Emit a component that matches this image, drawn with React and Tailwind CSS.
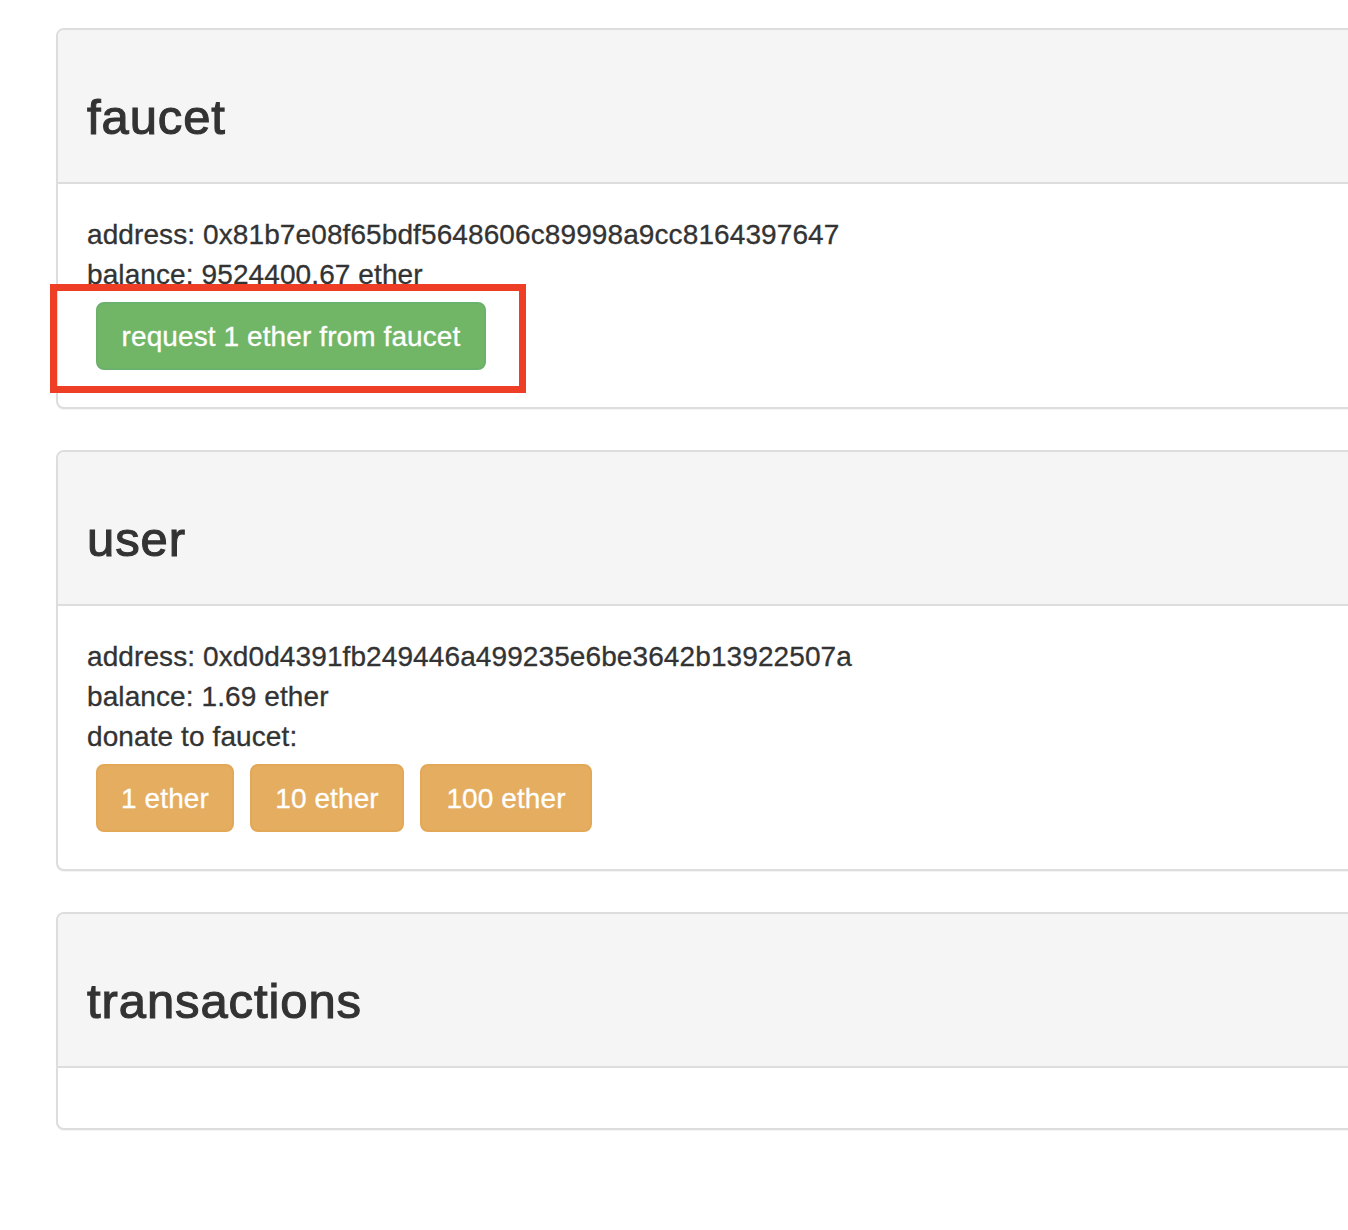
function Card({ title, children }) {
  return (
    <section className="w-[1400px] mb-[41px] rounded-lg border-2 border-[#ddd] bg-white shadow-[0_1px_1px_rgba(0,0,0,0.05)] overflow-hidden">
      <header className="h-[154px] pt-[57px] pl-[29px] bg-[#f5f5f5] border-b-2 border-[#ddd]">
        <h1 className="text-[49px] leading-[60px] font-normal tracking-[0.9px] [-webkit-text-stroke:1.1px_#333] text-[#333]">{title}</h1>
      </header>
      <div className="pt-[31px] pb-[29px] pl-[29px] text-[28px] leading-[40px] tracking-[0.1px] [-webkit-text-stroke:0.3px_#333] text-[#333]">{children}</div>
    </section>
  )
}

function Btn({ children, className }) {
  return (
    <button className={"h-[68px] pt-[2px] rounded-lg border-2 text-[28px] text-white [-webkit-text-stroke:0.3px_#fff] " + className}>
      {children}
    </button>
  )
}

export default function App() {
  return (
    <div className="relative w-[1348px] h-[1230px] overflow-hidden bg-white pl-[56px] pt-[28px] font-['Liberation_Sans',Arial,sans-serif]">
      <Card title="faucet">
        <div>address: 0x81b7e08f65bdf5648606c89998a9cc8164397647</div>
        <div>balance: 9524400.67 ether</div>
        <div className="flex gap-4 mt-[7px] mb-2 ml-[9px]">
          <Btn className="w-[390px] border-[#6bb06b] bg-[#71b566]">request 1 ether from faucet</Btn>
        </div>
      </Card>
      <Card title="user">
        <div>address: 0xd0d4391fb249446a499235e6be3642b13922507a</div>
        <div>balance: 1.69 ether</div>
        <div>donate to faucet:</div>
        <div className="flex gap-4 mt-[7px] mb-2 ml-[9px]">
          <Btn className="w-[138px] border-[#e3a857] bg-[#e4ad5f]">1 ether</Btn>
          <Btn className="w-[154px] border-[#e3a857] bg-[#e4ad5f]">10 ether</Btn>
          <Btn className="w-[172px] border-[#e3a857] bg-[#e4ad5f]">100 ether</Btn>
        </div>
      </Card>
      <Card title="transactions" />
      <div className="absolute left-[50px] top-[284px] w-[476px] h-[109px] border-[7px] border-[#ee3e26]" />
    </div>
  )
}
